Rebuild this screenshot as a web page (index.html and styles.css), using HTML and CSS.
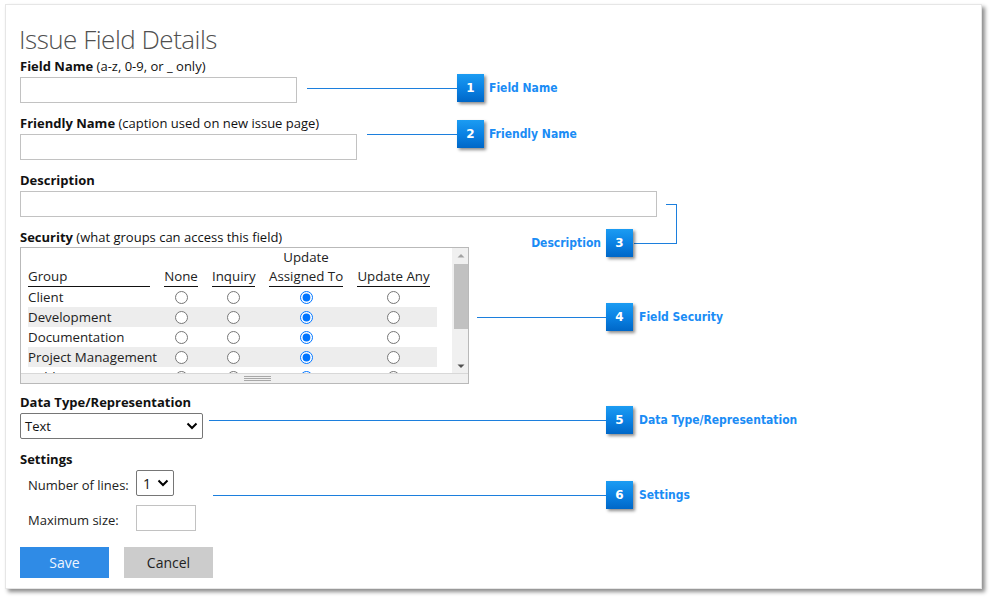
FILE: index.html
```html
<!DOCTYPE html>
<html>
<head>
<meta charset="utf-8">
<link rel="stylesheet" href="styles.css">
</head>
<body>
<div class="panel">
  <h1 class="title">Issue Field Details</h1>

  <div class="field">
    <div class="label"><b>Field Name</b> (a-z, 0-9, or _ only)</div>
    <input class="text-input w-name" type="text">
  </div>

  <div class="field">
    <div class="label"><b>Friendly Name</b> (caption used on new issue page)</div>
    <input class="text-input w-friendly" type="text">
  </div>

  <div class="field">
    <div class="label"><b>Description</b></div>
    <input class="text-input w-desc" type="text">
  </div>

  <div class="field field-security">
    <div class="label"><b>Security</b> (what groups can access this field)</div>
    <div class="sec-box">
      <div class="sec-main">
        <div class="sec-content">
          <div class="sec-row sec-head">
            <div class="hcell hleft"><span>Group</span></div>
            <div class="hcell"><span>None</span></div>
            <div class="hcell"><span>Inquiry</span></div>
            <div class="hcell"><span>Update<br>Assigned To</span></div>
            <div class="hcell"><span>Update Any</span></div>
          </div>
          <div class="sec-row">
            <div class="gname">Client</div>
            <div class="rc"><input type="radio" name="r1"></div>
            <div class="rc"><input type="radio" name="r1"></div>
            <div class="rc"><input type="radio" name="r1" checked></div>
            <div class="rc"><input type="radio" name="r1"></div>
          </div>
          <div class="sec-row alt">
            <div class="gname">Development</div>
            <div class="rc"><input type="radio" name="r2"></div>
            <div class="rc"><input type="radio" name="r2"></div>
            <div class="rc"><input type="radio" name="r2" checked></div>
            <div class="rc"><input type="radio" name="r2"></div>
          </div>
          <div class="sec-row">
            <div class="gname">Documentation</div>
            <div class="rc"><input type="radio" name="r3"></div>
            <div class="rc"><input type="radio" name="r3"></div>
            <div class="rc"><input type="radio" name="r3" checked></div>
            <div class="rc"><input type="radio" name="r3"></div>
          </div>
          <div class="sec-row alt">
            <div class="gname">Project Management</div>
            <div class="rc"><input type="radio" name="r4"></div>
            <div class="rc"><input type="radio" name="r4"></div>
            <div class="rc"><input type="radio" name="r4" checked></div>
            <div class="rc"><input type="radio" name="r4"></div>
          </div>
          <div class="sec-row">
            <div class="gname">Public</div>
            <div class="rc"><input type="radio" name="r5"></div>
            <div class="rc"><input type="radio" name="r5"></div>
            <div class="rc"><input type="radio" name="r5" checked></div>
            <div class="rc"><input type="radio" name="r5"></div>
          </div>
        </div>
        <div class="sbar">
          <svg class="sarrow" width="14" height="14" viewBox="0 0 14 14"><path d="M3.5 8.5 L7 5 L10.5 8.5 Z" fill="#a3a3a3"/></svg>
          <div class="strack"><div class="sthumb"></div></div>
          <svg class="sarrow" width="14" height="14" viewBox="0 0 14 14"><path d="M3.5 5.5 L7 9 L10.5 5.5 Z" fill="#505050"/></svg>
        </div>
      </div>
      <div class="sec-grip"><span class="grip"></span></div>
    </div>
  </div>

  <div class="field">
    <div class="label"><b>Data Type/Representation</b></div>
    <div class="select w-type">
      <span>Text</span>
      <svg width="12" height="8" viewBox="0 0 12 8"><path d="M1.5 1.5 L6 6 L10.5 1.5" fill="none" stroke="#000" stroke-width="2"/></svg>
    </div>
  </div>

  <div class="field-settings">
    <div class="label"><b>Settings</b></div>
    <div class="settings-grid">
      <div class="s-label">Number of lines:</div>
      <div class="select w-lines">
        <span>1</span>
        <svg width="12" height="8" viewBox="0 0 12 8"><path d="M1.5 1.5 L6 6 L10.5 1.5" fill="none" stroke="#000" stroke-width="2"/></svg>
      </div>
      <div class="s-label">Maximum size:</div>
      <input class="text-input w-max" type="text">
    </div>
  </div>

  <div class="buttons">
    <button class="btn btn-save">Save</button>
    <button class="btn btn-cancel">Cancel</button>
  </div>
</div>

<div class="callouts">
  <div class="cline h" style="left:307px;top:88px;width:150px"></div>
  <div class="badge" style="left:457px;top:74px">1</div>
  <div class="ctext" style="left:489px;top:80px">Field Name</div>

  <div class="cline h" style="left:367px;top:134px;width:90px"></div>
  <div class="badge" style="left:457px;top:120px">2</div>
  <div class="ctext" style="left:489px;top:126px">Friendly Name</div>

  <div class="cline h" style="left:666px;top:204px;width:11px"></div>
  <div class="cline v" style="left:676px;top:204px;height:40px"></div>
  <div class="cline h" style="left:634px;top:243px;width:43px"></div>
  <div class="badge" style="left:606px;top:229px">3</div>
  <div class="ctext ctext-r" style="right:390px;top:235px">Description</div>

  <div class="cline h" style="left:477px;top:317px;width:129px"></div>
  <div class="badge" style="left:606px;top:303px">4</div>
  <div class="ctext" style="left:639px;top:309px">Field Security</div>

  <div class="cline h" style="left:209px;top:420px;width:397px"></div>
  <div class="badge" style="left:606px;top:406px">5</div>
  <div class="ctext" style="left:639px;top:412px">Data Type/Representation</div>

  <div class="cline h" style="left:213px;top:495px;width:393px"></div>
  <div class="badge" style="left:606px;top:481px">6</div>
  <div class="ctext" style="left:639px;top:487px">Settings</div>
</div>
</body>
</html>
```

FILE: styles.css
```css
* { box-sizing: border-box; }

html, body {
  margin: 0;
  padding: 0;
  background: #ffffff;
}

body {
  position: relative;
  width: 991px;
  height: 598px;
  overflow: hidden;
  font-family: "Open Sans", "Noto Sans", sans-serif;
  font-size: 13px;
  color: #111;
}

.panel {
  margin: 4px 0 0 5px;
  width: 977px;
  height: 585px;
  padding: 17px 0 0 14px;
  background: #fff;
  border: 1px solid #e6e6e6;
  box-shadow: 3px 3px 4px rgba(0, 0, 0, 0.45);
}

.title {
  margin: 0;
  font-size: 26px;
  letter-spacing: -0.5px;
  line-height: 35px;
  font-weight: 300;
  color: #505050;
  margin-left: -1px;
}

.field {
  margin-bottom: 11px;
}

.label {
  line-height: 18px;
  height: 18px;
  white-space: nowrap;
}

.label b {
  font-weight: 700;
}

.text-input {
  display: block;
  margin: 2px 0 0 0;
  height: 26px;
  border: 1px solid #c2c2c2;
  border-radius: 0;
  background: #fff;
  padding: 0 4px;
  font: inherit;
  outline: none;
}

.w-name { width: 277px; }
.w-friendly { width: 337px; }
.w-desc { width: 637px; }
.w-max { width: 60px; margin: 0; }

/* Security box */
.field-security {
  margin-bottom: 9px;
}

.sec-box {
  margin-top: 1px;
  width: 449px;
  height: 137px;
  border: 1px solid #b9b9b9;
  display: flex;
  flex-direction: column;
}

.sec-main {
  flex: 1;
  display: flex;
  overflow: hidden;
}

.sec-content {
  flex: 1;
  overflow: hidden;
  padding: 0 0 0 7px;
  font-size: 13.3px;
}

.sec-row {
  display: grid;
  grid-template-columns: 122px 34px 43px 74px 73px;
  column-gap: 14px;
  width: 409px;
  padding-right: 7px;
  height: 20px;
  align-items: center;
}

.sec-row.alt {
  background: #ededed;
}

.sec-head {
  height: 38px;
  align-items: end;
  margin-bottom: 1px;
}

.hcell {
  text-align: center;
  line-height: 19px;
  border-bottom: 1px solid #111;
  white-space: nowrap;
  color: #222;
}

.hcell.hleft {
  text-align: left;
}

.gname {
  white-space: nowrap;
  line-height: 20px;
  color: #222;
}

.rc {
  display: flex;
  justify-content: center;
  align-items: center;
  height: 20px;
}

.rc input {
  margin: 0;
  width: 13px;
  height: 13px;
}

.sbar {
  width: 16px;
  background: #f0f0f0;
  display: flex;
  flex-direction: column;
  padding: 0 1px 0 1px;
  border-left: 1px solid #f0f0f0;
}

.sarrow {
  display: block;
  flex: none;
  margin-left: 0;
}

.sarrow:first-child {
  margin-top: 1px;
}

.strack {
  flex: 1;
  padding-top: 1px;
}

.sthumb {
  width: 14px;
  height: 65px;
  background: #c1c1c1;
}

.sec-grip {
  height: 10px;
  flex: none;
  background: #f0f0f0;
  border-top: 1px solid #d8d8d8;
  display: flex;
  justify-content: center;
  align-items: center;
}

.grip {
  display: block;
  width: 27px;
  height: 5px;
  margin-left: 25px;
  background: repeating-linear-gradient(to bottom, #a8a8a8 0, #a8a8a8 1px, transparent 1px, transparent 2px);
}

/* select */
.select {
  margin-top: 2px;
  height: 26px;
  border: 1px solid #767676;
  border-radius: 2px;
  background: #fff;
  display: flex;
  align-items: center;
  justify-content: space-between;
  padding: 0 4px 0 4px;
  color: #111;
}

.w-type { width: 183px; }

.w-lines {
  width: 38px;
  margin: 0;
  padding: 0 4px 0 6px;
  font-size: 14px;
}

.field-settings {
  margin-bottom: 16px;
}

.settings-grid {
  margin-top: 2px;
  padding-left: 8px;
  display: grid;
  grid-template-columns: 108px auto;
  row-gap: 9px;
  align-items: center;
  justify-items: start;
}

.s-label {
  font-size: 13px;
  padding-top: 4px;
  color: #222;
}

.buttons {
  display: flex;
  gap: 15px;
}

.btn {
  width: 89px;
  height: 31px;
  border: none;
  border-radius: 0;
  font-family: inherit;
  font-size: 14px;
  padding: 0;
}

.btn-save {
  background: #2f8be6;
  color: #eef5ff;
}

.btn-cancel {
  background: #cccccc;
  color: #222;
}

/* callouts overlay */
.callouts {
  position: absolute;
  left: 0;
  top: 0;
  width: 991px;
  height: 598px;
  pointer-events: none;
}

.cline {
  position: absolute;
  background: #1c7fdd;
}

.cline.h { height: 1px; }
.cline.v { width: 1px; }

.badge {
  position: absolute;
  width: 27px;
  height: 28px;
  background: linear-gradient(to bottom, #1c9cf2 0%, #0a82e4 50%, #0067c7 100%);
  box-shadow: 2px 2px 3px rgba(0, 0, 0, 0.45);
  color: #fff;
  font-family: "DejaVu Sans", sans-serif;
  font-weight: 700;
  font-size: 12px;
  line-height: 28px;
  text-align: center;
}

.ctext {
  position: absolute;
  font-family: "DejaVu Sans", sans-serif;
  font-stretch: condensed;
  font-weight: 700;
  font-size: 12px;
  line-height: 16px;
  color: #1a8cf5;
  white-space: nowrap;
}
```
